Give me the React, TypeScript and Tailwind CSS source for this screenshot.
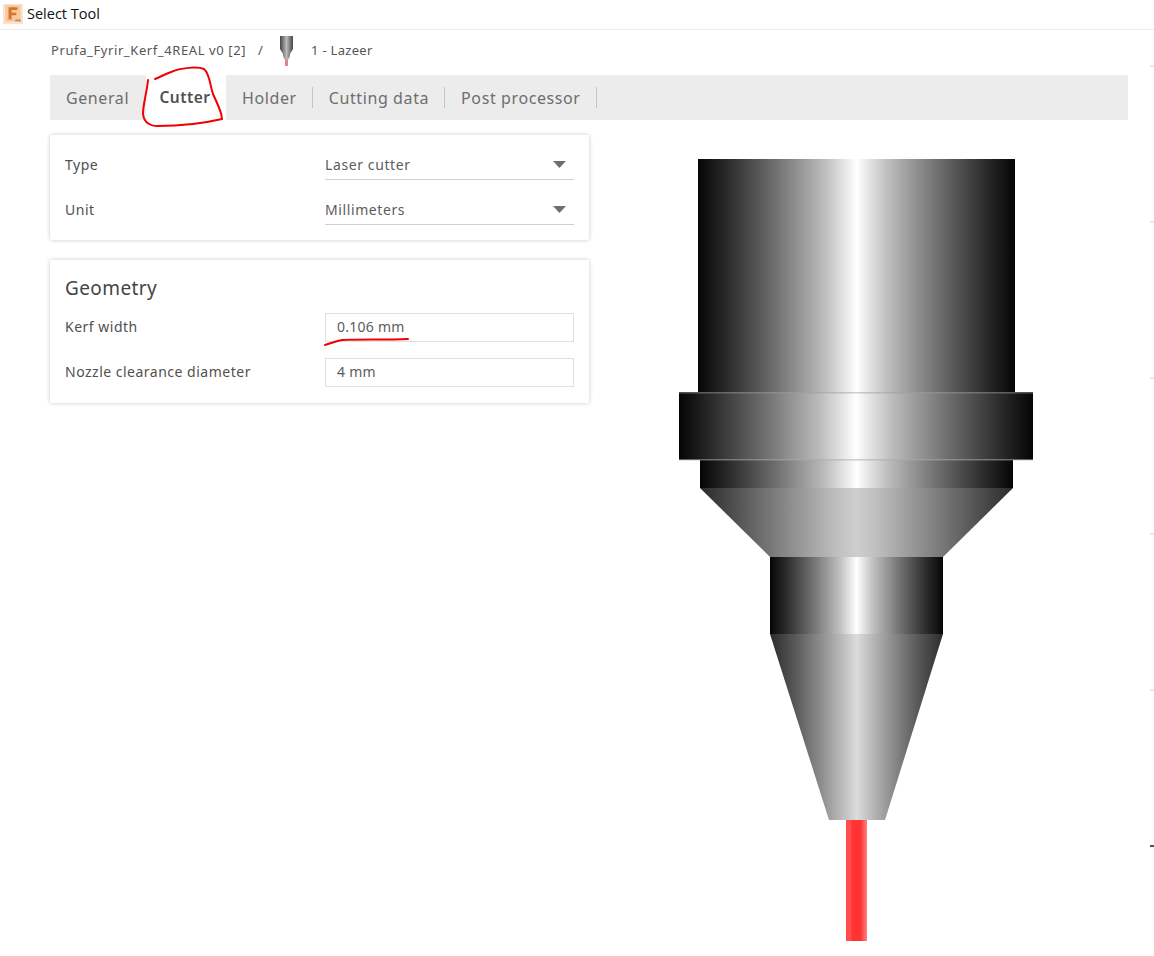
const TABS_AFTER = ["Holder", "Cutting data", "Post processor"];

const TICKS = [
  { y: 65, color: "bg-[#d6eafa]" },
  { y: 221, color: "bg-[#d6eafa]" },
  { y: 377, color: "bg-[#d6eafa]" },
  { y: 533, color: "bg-[#d6eafa]" },
  { y: 689, color: "bg-[#d6eafa]" },
  { y: 845, color: "bg-[#555555]" },
];

function AppIcon() {
  return (
    <svg width="20" height="20" viewBox="0 0 18 18" className="ml-[3px]">
      <rect width="18" height="18" fill="#fbe3cd" />
      <rect x="2" y="1" width="14" height="15" fill="#f6c9a0" />
      <path d="M5 3h8v2.4H7.8v2.4H12v2.3H7.8V14H5z" fill="#d9752a" />
      <rect x="11" y="14" width="5" height="1.6" fill="#c98a55" />
    </svg>
  );
}

function TinyTool() {
  return (
    <svg width="13" height="30" viewBox="0 0 13 30">
      <defs>
        <linearGradient id="tiny" x1="0" x2="1" y1="0" y2="0">
          <stop offset="0" stopColor="#444" />
          <stop offset="0.5" stopColor="#bbb" />
          <stop offset="1" stopColor="#444" />
        </linearGradient>
      </defs>
      <rect x="0" y="0" width="13" height="13" fill="url(#tiny)" />
      <path d="M0 13h13l-3 5v2l-2 4H5l-2-4v-2z" fill="url(#tiny)" />
      <rect x="5" y="24" width="3" height="6" fill="#ee7f8a" />
    </svg>
  );
}

function Caret() {
  return (
    <svg width="13" height="7" viewBox="0 0 13 7">
      <path d="M0 0h13L6.5 7z" fill="#6f6f6f" />
    </svg>
  );
}

function SelectRow({ label, value }: { label: string; value: string }) {
  return (
    <div className="flex items-center h-[30px]">
      <div className="w-[260px] pb-[2px] text-[14px] tracking-[0.5px] text-[#505050]">{label}</div>
      <div className="w-[249px] h-[30px] flex items-center justify-between border-b border-[#cfcfcf] pr-[8px] text-[14px] tracking-[0.6px] text-[#5c5c5c]">
        <span>{value}</span>
        <Caret />
      </div>
    </div>
  );
}

function InputRow({ label, value }: { label: string; value: string }) {
  return (
    <div className="flex items-center h-[29px]">
      <div className="w-[260px] pb-[2px] text-[14px] tracking-[0.5px] text-[#505050]">{label}</div>
      <div className="w-[249px] h-[29px] flex items-center border border-[#e0e0e0] pl-[11px] pb-[2px] text-[14px] tracking-[0.25px] text-[#5c5c5c]">
        {value}
      </div>
    </div>
  );
}

function ToolDrawing() {
  return (
    <svg width="356" height="784" viewBox="678 158 356 784" className="block">
      <defs>
        <linearGradient id="metal" x1="0" x2="1" y1="0" y2="0">
          <stop offset="0" stopColor="#050505" />
          <stop offset="0.1" stopColor="#2e2e2e" />
          <stop offset="0.25" stopColor="#727272" />
          <stop offset="0.4" stopColor="#bdbdbd" />
          <stop offset="0.46" stopColor="#e4e4e4" />
          <stop offset="0.5" stopColor="#fff" />
          <stop offset="0.54" stopColor="#e4e4e4" />
          <stop offset="0.6" stopColor="#bdbdbd" />
          <stop offset="0.75" stopColor="#727272" />
          <stop offset="0.9" stopColor="#2e2e2e" />
          <stop offset="1" stopColor="#050505" />
        </linearGradient>
        <linearGradient id="cone" x1="0" x2="1" y1="0" y2="0">
          <stop offset="0" stopColor="#2a2a2a" />
          <stop offset="0.25" stopColor="#808080" />
          <stop offset="0.44" stopColor="#c0c0c0" />
          <stop offset="0.5" stopColor="#cecece" />
          <stop offset="0.56" stopColor="#c0c0c0" />
          <stop offset="0.75" stopColor="#808080" />
          <stop offset="1" stopColor="#2a2a2a" />
        </linearGradient>
        <linearGradient id="tip" gradientUnits="userSpaceOnUse" x1="770" x2="943" y1="0" y2="0">
          <stop offset="0" stopColor="#2c2c2c" />
          <stop offset="0.15" stopColor="#5a5a5a" />
          <stop offset="0.3" stopColor="#8f8f8f" />
          <stop offset="0.44" stopColor="#c4c4c4" />
          <stop offset="0.5" stopColor="#dcdcdc" />
          <stop offset="0.56" stopColor="#c4c4c4" />
          <stop offset="0.7" stopColor="#8f8f8f" />
          <stop offset="0.85" stopColor="#5a5a5a" />
          <stop offset="1" stopColor="#2c2c2c" />
        </linearGradient>
        <linearGradient id="beam" x1="0" x2="1" y1="0" y2="0">
          <stop offset="0" stopColor="#ff4a4a" />
          <stop offset="0.2" stopColor="#ff4f4f" />
          <stop offset="0.3" stopColor="#ff3333" />
          <stop offset="0.7" stopColor="#ff3333" />
          <stop offset="0.85" stopColor="#ff5c5c" />
          <stop offset="1" stopColor="#ff8080" />
        </linearGradient>
      </defs>
      <rect x="698" y="159" width="317" height="233" fill="url(#metal)" />
      <rect x="700" y="460" width="313" height="28" fill="url(#metal)" />
      <rect x="679" y="392" width="354" height="68" fill="url(#metal)" />
      <rect x="679" y="392" width="354" height="1.5" fill="#999" fillOpacity="0.5" />
      <rect x="679" y="459" width="354" height="1.5" fill="#aaa" fillOpacity="0.55" />
      <path d="M700 488h313l-70 69H770z" fill="url(#cone)" />
      <rect x="770" y="557" width="173" height="77" fill="url(#metal)" />
      <path d="M770 634h173l-58 186h-56z" fill="url(#tip)" />
      <rect x="846" y="820" width="21" height="121" fill="url(#beam)" />
    </svg>
  );
}

export default function App() {
  return (
    <div className="relative w-[1154px] h-[956px] overflow-hidden bg-white font-['Noto_Sans',sans-serif]">
      <div className="h-[30px] flex items-center gap-[4px] border-b border-[#ececec] pb-[1px]">
        <AppIcon />
        <span className="text-[14.5px] text-[#111111] font-['Open_Sans',sans-serif]">Select Tool</span>
      </div>

      <div className="flex items-center h-[45px] pl-[51px] pb-[4px] text-[13px] tracking-[0.6px] text-[#555555]">
        <span className="w-[207px]">Prufa_Fyrir_Kerf_4REAL v0 [2]</span>
        <span className="w-[22px]">/</span>
        <TinyTool />
        <span className="ml-[18px] tracking-[0.3px]">1 - Lazeer</span>
      </div>

      <div className="ml-[50px] w-[1078px] h-[45px] flex items-center bg-[#ececec] text-[16px] tracking-[0.6px] text-[#6e6e6e]">
        <div className="w-[96px] pl-[16px]">General</div>
        <div className="w-[80px] h-[45px] bg-white flex items-center justify-center pr-[2px] text-[15.5px] font-semibold tracking-[0.5px] text-[#505050]">
          Cutter
        </div>
        {TABS_AFTER.map((t) => (
          <div key={t} className="flex items-center pl-[16px]">
            <span>{t}</span>
            <span className="ml-[15px] w-px h-[21px] bg-[#c4c4c4]" />
          </div>
        ))}
      </div>

      <div className="flex">
        <div className="ml-[50px] w-[539px] mt-[15px] flex flex-col gap-[20px]">
          <div className="h-[105px] rounded-[2px] bg-white shadow-[0_0_4px_rgba(0,0,0,0.22)] px-[15px] pt-[15px] flex flex-col gap-[15px]">
            <SelectRow label="Type" value="Laser cutter" />
            <SelectRow label="Unit" value="Millimeters" />
          </div>
          <div className="h-[143px] rounded-[2px] bg-white shadow-[0_0_4px_rgba(0,0,0,0.22)] px-[15px] pt-[15px] flex flex-col">
            <div className="text-[19px] leading-[26px] tracking-[0.4px] text-[#444444] mb-[12px]">Geometry</div>
            <div className="flex flex-col gap-[16px]">
              <InputRow label="Kerf width" value="0.106 mm" />
              <InputRow label="Nozzle clearance diameter" value="4 mm" />
            </div>
          </div>
        </div>
        <div className="ml-[89px] mt-[38px]">
          <ToolDrawing />
        </div>
      </div>

      {/* marker scribbles drawn over the screenshot */}
      <svg width="1154" height="956" className="absolute inset-0 pointer-events-none" fill="none" stroke="#f00000" strokeWidth="2" strokeLinecap="round">
        <path d="M148 80C147 92 143 104 143 114C144 122 149 126 158 126C178 126 205 123 222 119C222 112 216 101 213 94C210 86 210 74 204 69C197 66 180 68 171 72C165 74 160 77 155 79" />
        <path d="M325 345C332 343 336 341 342 340C360 339 385 340 408 339" />
      </svg>

      {TICKS.map((t) => (
        <div key={t.y} className={`absolute right-0 w-[4px] h-[2px] ${t.color}`} style={{ top: t.y }} />
      ))}
    </div>
  );
}
